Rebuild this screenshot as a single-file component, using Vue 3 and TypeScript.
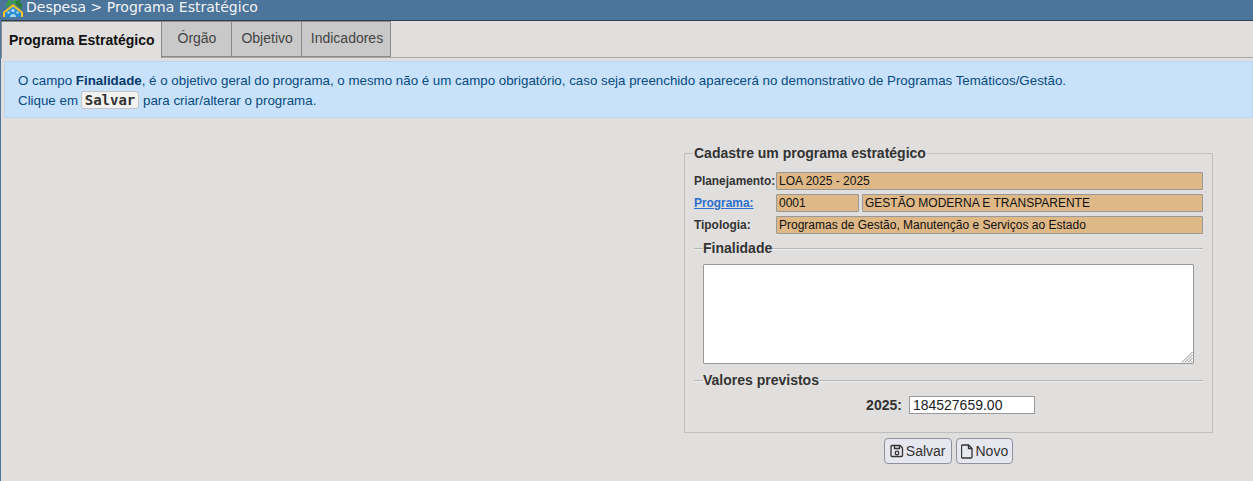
<script setup lang="ts">
const tabs = ['Programa Estratégico', 'Órgão', 'Objetivo', 'Indicadores']
const activeTab = 0
</script>

<template>
  <div class="page">
    <header class="topbar">
      <svg class="logo" width="20" height="18" viewBox="0 0 20 18">
        <path d="M3 8V3h2V0h3v2h2V0h3v1h2V0h2v3h2v6L10 3z" fill="#3f9a4a" />
        <path d="M13 1h2V0h2v3h2v6l-6-4z" fill="#2c7a3c" />
        <path d="M0 17v-5l10-8 10 8v5h-2v-4l-8-6-8 6v4z" fill="#f0c52e" />
        <path d="M2 17v-4l8-6 8 6v4z" fill="#2c8bd0" />
        <circle cx="10" cy="10.500" r="1.800" fill="#a5d8f2" />
        <circle cx="5.500" cy="12.500" r="1.200" fill="#a5d8f2" />
        <circle cx="14.500" cy="12.500" r="1.200" fill="#a5d8f2" />
        <path d="M7 17c0-4 6-4 6 0z" fill="#a5d8f2" />
      </svg>
      <span>Despesa &gt; Programa Estratégico</span>
    </header>

    <nav class="tabs">
      <button
        v-for="(tab, i) in tabs"
        :key="tab"
        class="tab"
        :class="{ active: i === activeTab }"
        type="button"
      >
        {{ tab }}
      </button>
    </nav>

    <div class="alert">
      <p>O campo <b>Finalidade</b>, é o objetivo geral do programa, o mesmo não é um campo obrigatório, caso seja preenchido aparecerá no demonstrativo de Programas Temáticos/Gestão.</p>
      <p>Clique em <kbd>Salvar</kbd> para criar/alterar o programa.</p>
    </div>

    <main class="content">
      <div class="form-col">
        <fieldset class="panel">
          <legend>Cadastre um programa estratégico</legend>

          <div class="row">
            <label>Planejamento:</label>
            <input class="ro wide" value="LOA 2025 - 2025" readonly />
          </div>
          <div class="row">
            <label><a href="#">Programa:</a></label>
            <input class="ro code" value="0001" readonly />
            <input class="ro wide" value="GESTÃO MODERNA E TRANSPARENTE" readonly />
          </div>
          <div class="row">
            <label>Tipologia:</label>
            <input class="ro wide" value="Programas de Gestão, Manutenção e Serviços ao Estado" readonly />
          </div>

          <fieldset class="sub">
            <legend>Finalidade</legend>
            <div class="area-wrap">
              <textarea></textarea>
              <svg class="grip" width="12" height="12" viewBox="0 0 12 12" stroke="#8a8a8a" stroke-width="1">
                <path d="M1 11.500 11.500 1M4 11.500 11.500 4M7 11.500 11.500 7M10 11.500 11.500 10" />
              </svg>
            </div>
          </fieldset>

          <fieldset class="sub values">
            <legend>Valores previstos</legend>
            <div class="value-row">
              <b>2025:</b>
              <input value="184527659.00" />
            </div>
          </fieldset>
        </fieldset>

        <div class="actions">
          <button type="button" class="btn">
            <svg width="14" height="14" viewBox="0 0 14 14" fill="none" stroke="#333" stroke-width="1.300">
              <path d="M2 1.500h8l2.500 2.500v7.500a1 1 0 0 1-1 1h-9.500a1 1 0 0 1-1-1v-9a1 1 0 0 1 1-1z" />
              <path d="M4.500 1.500v3h5v-3" />
              <circle cx="7" cy="9" r="1.800" />
            </svg>
            Salvar
          </button>
          <button type="button" class="btn novo">
            <svg width="12" height="15" viewBox="0 0 12 15" fill="none" stroke="#333" stroke-width="1.300">
              <path d="M1.500 1h6l3.500 3.500v8.500a1 1 0 0 1-1 1h-8.500a1 1 0 0 1-1-1v-11a1 1 0 0 1 1-1z" />
              <path d="M7.500 1v3.500h3.500" />
            </svg>
            Novo
          </button>
        </div>
      </div>
    </main>
  </div>
</template>

<style>
html, body {
  margin: 0;
  background: #e0dfdd;
}
</style>

<style scoped>
.page {
  height: 481px;
  overflow: hidden;
  background: #e0dfdd;
  font-family: "Liberation Sans", Arial, sans-serif;
  color: #333;
  border-left: 1px solid #4b759b;
  box-sizing: border-box;
}

.topbar {
  height: 20px;
  margin-left: -1px;
  display: flex;
  align-items: flex-start;
  gap: 3px;
  padding-left: 3px;
  background: #4b759b;
  border-bottom: 1px solid #2f3f4e;
  color: #f2f4f6;
  font: 14px/14px "DejaVu Sans", sans-serif;
  overflow: hidden;
}

.logo {
  flex: none;
}

.tabs {
  display: flex;
  height: 36px;
  margin-left: -1px;
  padding-left: 1px;
  border-bottom: 1px solid #a9a8a6;
}

.tab {
  height: 36px;
  padding: 0 8px 3px;
  background: #c9c9c9;
  border: 1px solid #8a8a8a;
  border-left-width: 0;
  color: #444;
  font: 14px "Liberation Sans", sans-serif;
}

.tab:nth-child(2) {
  padding: 0 15px 3px 16px;
}

.tab:nth-child(3) {
  padding: 0 8px 3px 9px;
}

.tab:nth-child(4) {
  padding: 0 7px 3px 9px;
}

.tab.active {
  height: 37px;
  padding: 0 6px 0 7px;
  background: #e0dfdd;
  border-left-width: 1px;
  border-bottom: 0;
  color: #111;
  font-weight: bold;
}

.alert {
  margin: 3px 0 0 3px;
  height: 57px;
  box-sizing: border-box;
  padding: 9px 13px;
  background: #c9e2fc;
  border: 1px solid #bcd6ef;
  color: #084a7e;
  font-size: 13.330px;
}

.alert p {
  margin: 0;
  line-height: 20px;
}

.alert b {
  color: #06396a;
}

kbd {
  display: inline-block;
  padding: 0 3px;
  margin: 0 0 0 -1px;
  line-height: 17px;
  background: #f2f2f0;
  border: 1px solid #c4c4c4;
  border-radius: 3px;
  color: #333;
  font: bold 14px "DejaVu Sans Mono", monospace;
}

.content {
  display: flex;
  justify-content: flex-end;
  padding: 27px 40px 0 0;
}

.form-col {
  width: 529px;
}

.panel {
  margin: 0;
  height: 288px;
  box-sizing: border-box;
  padding: 11px 9px 0;
  border: 1px solid #bfbfbf;
}

.panel > legend {
  padding: 0 1px;
  margin-left: -1px;
  font-size: 14px;
  font-weight: bold;
  line-height: 16px;
  color: #333;
}

.row {
  display: flex;
  gap: 3px;
  height: 22px;
  align-items: flex-start;
}

.row label {
  width: 79px;
  flex: none;
  font-size: 11.900px;
  font-weight: bold;
  line-height: 18px;
  white-space: nowrap;
}

.row a {
  color: #2a6fcf;
}

.ro {
  height: 18px;
  box-sizing: border-box;
  padding: 0 2px;
  background: #deb887;
  border: 1px solid #999;
  border-radius: 1px;
  color: #111;
  font: 12px "Liberation Sans", sans-serif;
  outline: 0;
  min-width: 0;
}

.wide {
  flex: 1;
}

.code {
  width: 83px;
  flex: none;
}

.sub {
  margin: 2px 0 0;
  padding: 0 9px;
  border: 0;
  border-top: 1px solid #b5b5b5;
  box-shadow: inset 0 1px 0 #efefef;
}

.sub legend {
  padding: 0;
  margin-left: 0;
  font-size: 14px;
  font-weight: bold;
  line-height: 16px;
}

.area-wrap {
  position: relative;
  width: 491px;
  margin-top: 8px;
}

textarea {
  display: block;
  width: 491px;
  height: 100px;
  box-sizing: border-box;
  background: #fff;
  border: 1px solid #999;
  border-radius: 1px;
  resize: none;
}

.grip {
  position: absolute;
  right: 1px;
  bottom: 1px;
}

.values {
  margin-top: 8px;
}

.value-row {
  display: flex;
  justify-content: center;
  align-items: center;
  gap: 7px;
  margin: 8px 0 0 4px;
  font-size: 14px;
}

.value-row input {
  width: 126px;
  height: 18px;
  box-sizing: border-box;
  padding: 0 3px;
  background: #fff;
  border: 1px solid #999;
  color: #222;
  font: 14px "Liberation Sans", sans-serif;
  outline: 0;
}

.actions {
  display: flex;
  justify-content: center;
  gap: 4px;
  margin-top: 5px;
}

.btn {
  display: flex;
  align-items: center;
  gap: 2px;
  height: 26px;
  padding: 0 5px;
  background: #e7e7ef;
  border: 1px solid #8f8f9d;
  border-radius: 4px;
  color: #333;
  font: 14px "Liberation Sans", sans-serif;
}

.btn.novo {
  gap: 3px;
  padding: 0 4px;
}
</style>
